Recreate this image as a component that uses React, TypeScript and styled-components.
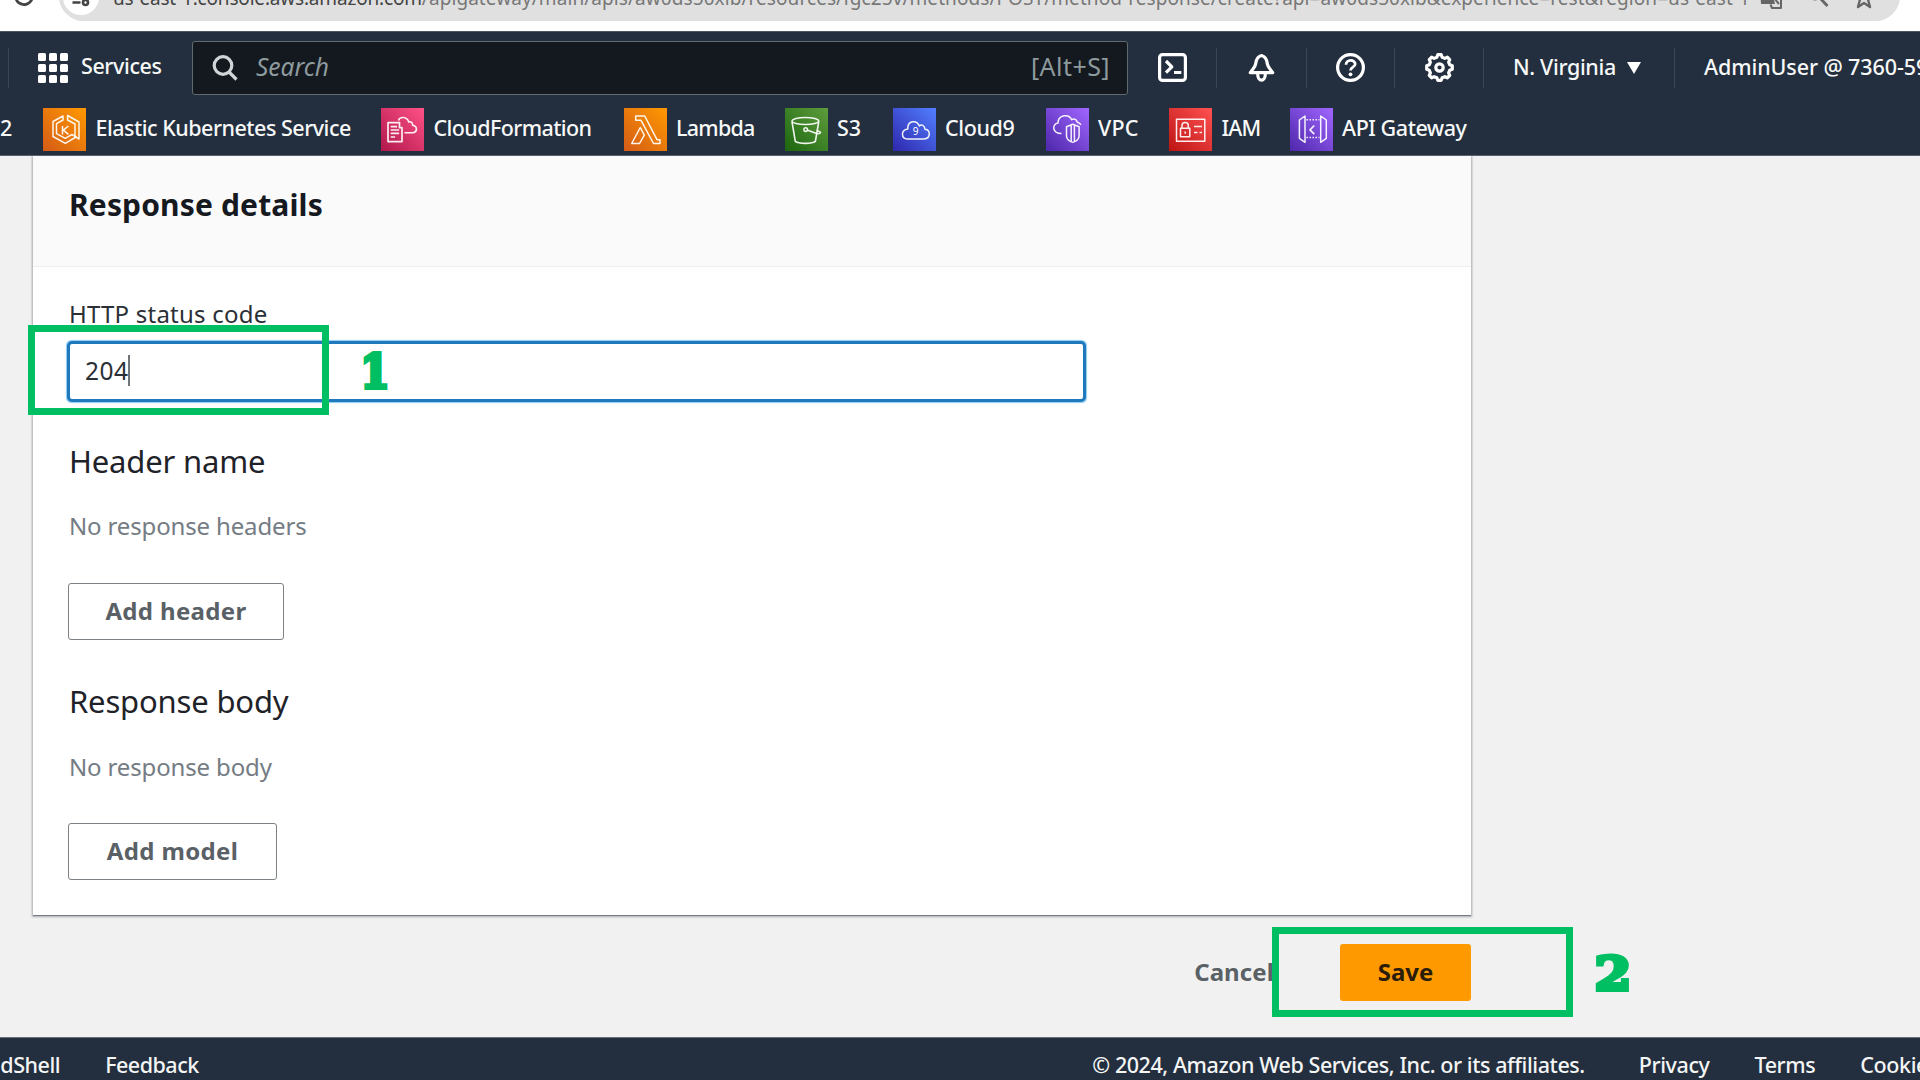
import React from "react";
import styled, { createGlobalStyle } from "styled-components";

const GlobalStyle = createGlobalStyle`
  *, *::before, *::after { box-sizing: border-box; }
  html, body { margin: 0; padding: 0; background: #f1f1f1; overflow: hidden; }
  body { font-family: "Noto Sans", "Open Sans", sans-serif; }
`;

const GREEN = "#00bf63";
const NAVY = "#232f3e";

const Shell = styled.div`
  position: relative;
  width: 1920px;
  height: 1080px;
  display: flex;
  flex-direction: column;
  overflow: hidden;
  background: #f1f1f1;
`;

/* ---------- browser chrome ---------- */

const BrowserBar = styled.div`
  flex: none;
  height: 31px;
  display: flex;
  align-items: flex-end;
  padding: 0 20px 10px 13px;
  background: #fff;
  overflow: hidden;
`;

const ReloadSlot = styled.span`
  display: flex;
  width: 50px;
  padding-bottom: 15px;
`;

const AddressPill = styled.div`
  flex: 1;
  height: 49px;
  display: flex;
  align-items: center;
  padding: 0 25px 0 4px;
  border-radius: 25px;
  background: #e0e0e0;
`;

const SiteBadge = styled.span`
  display: flex;
  align-items: center;
  justify-content: center;
  width: 36px;
  height: 36px;
  border-radius: 50%;
  background: #fff;
`;

const Url = styled.span`
  flex: none;
  width: 1646px;
  margin-left: 14px;
  padding-top: 2px;
  font-size: 19px;
  letter-spacing: 0.07px;
  line-height: 30px;
  white-space: nowrap;
  color: #777;
`;

const UrlHost = styled.span`
  letter-spacing: -0.18px;
  color: #444;
`;

const PillIcons = styled.span`
  flex: none;
  display: flex;
  align-items: center;
  gap: 23px;
  padding-top: 2px;
`;

/* ---------- console navigation ---------- */

const ConsoleNav = styled.header`
  flex: none;
  height: 125px;
  display: flex;
  flex-direction: column;
  border-top: 1px solid #4c5561;
  border-bottom: 1px solid #59616c;
  background: ${NAVY};
  color: #f7f8f8;
`;

const NavRow = styled.div`
  flex: none;
  height: 71px;
  display: flex;
  align-items: center;
`;

const NavCell = styled.div<{ $width?: number; $start?: boolean; $divider?: boolean }>`
  flex: none;
  display: flex;
  align-items: center;
  justify-content: ${(p) => (p.$start ? "flex-start" : "center")};
  width: ${(p) => (p.$width ? `${p.$width}px` : "auto")};
  height: 40px;
  padding-left: ${(p) => (p.$start ? "29px" : "0")};
  border-right: ${(p) => (p.$divider ? "1px solid #3b4654" : "0")};
`;

const NavText = styled.span<{ $track?: number; $gap?: number; $lift?: number }>`
  margin-left: ${(p) => p.$gap ?? 0}px;
  padding-bottom: ${(p) => (p.$lift ?? 1) * 2}px;
  font-size: 21.5px;
  font-weight: 500;
  letter-spacing: ${(p) => p.$track ?? -0.4}px;
  line-height: 30px;
  white-space: nowrap;
`;

const AppsGrid = styled.span`
  display: grid;
  grid-template-columns: repeat(3, 8px);
  grid-auto-rows: 8px;
  gap: 3px;
`;

const AppsDot = styled.i`
  border-radius: 1.5px;
  background: #fff;
`;

const SearchBox = styled.div`
  flex: none;
  width: 936px;
  height: 54px;
  display: flex;
  align-items: center;
  padding: 0 17px 0 19px;
  border: 1.5px solid #5f6b73;
  border-radius: 3px;
  background: #14181f;
  color: #8d9b9d;
  font-size: 24.5px;
  line-height: 34px;
`;

const SearchPlaceholder = styled.em`
  flex: 1;
  margin-left: 18px;
  padding-bottom: 2px;
`;

const SearchKeys = styled.span`
  padding-bottom: 3px;
  font-size: 25px;
  letter-spacing: 0.45px;
`;

const RegionArrow = styled.i`
  margin-left: 11px;
  border: solid transparent;
  border-width: 12px 7.5px 0;
  border-top-color: #fff;
`;

const Shortcuts = styled.nav`
  display: flex;
  align-items: center;
  height: 53px;
`;

const OverflowedShortcut = styled.span`
  flex: none;
  display: flex;
  justify-content: flex-end;
  width: 43px;
  padding-right: 31px;
`;

const Shortcut = styled.a<{ $slot: number }>`
  flex: none;
  display: flex;
  align-items: center;
  width: ${(p) => p.$slot}px;
`;

const Tile = styled.span<{ $from: string; $to: string }>`
  flex: none;
  display: flex;
  width: 43px;
  height: 43px;
  background: linear-gradient(45deg, ${(p) => p.$from}, ${(p) => p.$to});
`;

/* ---------- form ---------- */

const Page = styled.main`
  flex: none;
  width: 1471px;
  height: 881px;
  padding-left: 33px;
`;

const Card = styled.section`
  height: 759px;
  background: #fff;
  box-shadow: 0 1px 2px 1px rgba(0, 7, 22, 0.3), 0 1px 0 0 #a4a8ae;
  clip-path: inset(0 -4px -5px -4px);
`;

const CardHeader = styled.div`
  height: 111px;
  padding: 29px 36px 0;
  border-bottom: 1px solid #efefef;
  background: #fafafa;
`;

const CardTitle = styled.h2`
  margin: 0;
  font-size: 30px;
  font-weight: 700;
  letter-spacing: 0.15px;
  line-height: 40px;
  color: #16191f;
`;

const CardBody = styled.div`
  display: flex;
  flex-direction: column;
  align-items: flex-start;
  padding: 31px 36px 35px 35px;
`;

const FieldLabel = styled.label`
  margin-left: 1px;
  font-size: 24px;
  letter-spacing: 0.22px;
  line-height: 32px;
  color: #2b3036;
`;

const StatusInput = styled.div`
  display: flex;
  align-items: center;
  width: 1019px;
  height: 61px;
  margin: 11px 0 0 -1px;
  padding: 0 0 2px 15px;
  border: 3px solid #2078bd;
  border-radius: 5px;
  box-shadow: 0 0 1px 0.5px #8fcdf2;
  background: #fff;
  font-size: 24.5px;
  letter-spacing: 0.45px;
  color: #2b3036;
`;

const Caret = styled.i`
  width: 1.5px;
  height: 31px;
  background: #70757a;
`;

const SectionTitle = styled.h3<{ $above: number }>`
  margin: ${(p) => p.$above}px 0 0 1px;
  font-size: 31px;
  font-weight: 400;
  letter-spacing: -0.17px;
  line-height: 40px;
  color: #1f2329;
`;

const EmptyNote = styled.p<{ $above: number }>`
  margin: ${(p) => p.$above}px 0 0 1px;
  font-size: 24px;
  letter-spacing: -0.15px;
  line-height: 32px;
  color: #757c84;
`;

const OutlineButton = styled.button<{ $width: number; $above: number }>`
  width: ${(p) => p.$width}px;
  height: 57px;
  margin: ${(p) => p.$above}px 0 0;
  padding: 0 0 3px;
  border: 1.5px solid #7b8185;
  border-radius: 3px;
  background: #fff;
  font: 700 24px "Noto Sans", sans-serif;
  letter-spacing: 0.35px;
  color: #5a6166;
`;

const Actions = styled.div`
  display: flex;
  align-items: center;
  justify-content: flex-end;
  gap: 66px;
  margin-top: 29px;
`;

const CancelLink = styled.button`
  padding: 0 0 3px;
  border: 0;
  background: none;
  font: 700 24px "Noto Sans", sans-serif;
  letter-spacing: 0.1px;
  color: #5a6166;
`;

const SaveButton = styled.button`
  width: 131px;
  height: 57px;
  padding: 0 0 3px;
  border: 0;
  border-radius: 3px;
  background: #ff9900;
  font: 700 24px "Noto Sans", sans-serif;
  color: #2a1d0a;
`;

/* ---------- footer ---------- */

const Footer = styled.footer`
  flex: none;
  height: 43px;
  display: flex;
  align-items: center;
  padding-top: 12px;
  border-top: 1px solid #687078;
  background: ${NAVY};
  color: #f4f5f5;
`;

const FooterGroup = styled.div<{ $push?: boolean }>`
  flex: none;
  display: flex;
  gap: 45px;
  margin-left: ${(p) => (p.$push ? "auto" : "-44px")};
  margin-right: ${(p) => (p.$push ? "-131px" : "0")};
`;

/* ---------- tutorial marks drawn over the page ---------- */

const Highlight = styled.div<{ $x: number; $y: number; $w: number }>`
  position: absolute;
  left: ${(p) => p.$x}px;
  top: ${(p) => p.$y}px;
  width: ${(p) => p.$w}px;
  height: 90px;
  border: 7px solid ${GREEN};
`;

const StepNumber = styled.span<{ $x: number; $y: number; $stretch: number }>`
  position: absolute;
  left: ${(p) => p.$x}px;
  top: ${(p) => p.$y}px;
  width: 50px;
  text-align: center;
  font: 700 47px/50px "DejaVu Serif", serif;
  color: ${GREEN};
  -webkit-text-stroke: 4px ${GREEN};
  transform: scaleX(${(p) => p.$stretch});
`;

/* ---------- icons ---------- */

const Glyph = styled.svg`
  display: block;
  flex: none;
  fill: none;
  stroke: currentColor;
  stroke-linejoin: round;
`;

const ServiceGlyph = styled(Glyph).attrs({ viewBox: "0 0 43 43", width: 43, height: 43 })`
  stroke: #fff;
  stroke-width: 1.5;
  stroke-opacity: 0.92;
`;

const TopGlyph = styled(Glyph).attrs({ viewBox: "0 0 29 29", width: 29, height: 29 })`
  stroke: #fff;
  stroke-width: 3.2;
`;

const teeth = 8;
const gearPath =
  Array.from({ length: teeth }, (_, i) => {
    const at = (r: number, offset: number) => {
      const a = ((i + offset) / teeth) * Math.PI * 2 - Math.PI / 2;
      return `${(14.5 + r * Math.cos(a)).toFixed(2)} ${(14.5 + r * Math.sin(a)).toFixed(2)}`;
    };
    return `${i ? "L" : "M"}${at(12.9, -0.17)}L${at(12.9, 0.17)}L${at(10.6, 0.32)}L${at(10.6, 0.68)}`;
  }).join("") + "Z";

type Service = {
  name: string;
  slot: number;
  track: number;
  from: string;
  to: string;
  art: React.ReactNode;
};

const services: Service[] = [
  {
    name: "Elastic Kubernetes Service", slot: 338, track: -0.5, from: "#d45b17", to: "#ff9900",
    art: (
      <>
        <path d="M20 8 10 13.5v15l12.3 6.8L33 29l-4-2.6-6.7 4-8.8-4.7v-10L20 12z" />
        <path d="M24.6 7.5 36 14v17l-4-2.6V16l-7.4-4z" />
        <path d="M19.5 18v8.4M25.4 18l-5 4.1 5 4.3" />
      </>
    ),
  },
  {
    name: "CloudFormation", slot: 242.5, track: -0.6, from: "#b0174b", to: "#ff5288",
    art: (
      <>
        <path d="M7 14.6h11.5v5H21v14H7z" strokeWidth="1.7" />
        <path d="M9.7 18.6h6.4M9.7 22h8.4M9.7 25.4h8.4M9.7 29h4.4M17.5 12.5C18.6 8.3 26 8.4 27.8 14c2.2-.8 4 .6 3.8 3.3 5 1 5 6.6.6 7.4h-8.7" strokeWidth="1.6" />
      </>
    ),
  },
  {
    name: "Lambda", slot: 161, track: -0.75, from: "#d45b17", to: "#ff9900",
    art: (
      <>
        <path d="M11.7 8h9L33 31.7h3v3.8h-6.5L17 12.3h-5.3z" />
        <path d="m16.3 19.5 4 7.6-4.8 8.4H7.7z" />
      </>
    ),
  },
  {
    name: "S3", slot: 108, track: -0.1, from: "#1b660f", to: "#5f9d3d",
    art: (
      <>
        <ellipse cx="20.4" cy="13" rx="13.4" ry="3.6" />
        <path d="m7 13.8 3.3 19.6c3.5 2.6 16.6 2.6 20.1 0l3.3-19.6" strokeWidth="1.6" />
        <circle cx="20.7" cy="21.6" r="1.8" />
        <path d="m22 22 9 3.3c3 .9 5.5-.2 4.2-1.3l-3.5-1.7" />
      </>
    ),
  },
  {
    name: "Cloud9", slot: 153, track: -0.4, from: "#2e27ad", to: "#527fff",
    art: (
      <>
        <path d="M14.5 31H31c7-.7 6.8-9 1-9.7-.4-4.3-3.6-5-5.6-3.3-2.6-6.4-12-5.7-11.6 3-7.3 1-6.8 9.700-.3 10z" />
        <text x="22.7" y="27" fontSize="10" fill="#fff" stroke="none" textAnchor="middle">9</text>
      </>
    ),
  },
  {
    name: "VPC", slot: 123.5, track: 0.25, from: "#4d27aa", to: "#a166ff",
    art: (
      <>
        <path d="M15.5 25.5C6 25.5 5.7 16 12 15c.3-8.5 11-9.5 13.6-3.3 3-1.7 5 0 5.7 2.6 1.7.4 2.7 1.2 3.7 2.4" />
        <path d="m20.5 18.7 6.3-2.4 6.3 2.4V28c0 3-2.7 5.7-6.3 6.2-3.6-.5-6.3-3.2-6.3-6.2zM25.2 17v16.7M28.4 17v16.7" />
      </>
    ),
  },
  {
    name: "IAM", slot: 120.5, track: -0.9, from: "#bd1414", to: "#ff5252",
    art: (
      <>
        <path d="M7.5 11.3h28.3v22H7.5zM11.5 20.3h9.3v8.4h-9.3zM13 20v-2.5c0-4 6.3-4 6.3 0V20M16.2 23.5v2.3" />
        <path d="M25 18.5h8M25 24.5h3.5M30.5 24.5H33" />
      </>
    ),
  },
  {
    name: "API Gateway", slot: 200, track: -0.45, from: "#4d27aa", to: "#a166ff",
    art: (
      <>
        <path d="m15 8-5.6 4v18.3l5.6 4zM30.7 8l5.6 4v18.3l-5.6 4z" />
        <path d="M16.5 11.8h13M16.5 29.4h13" strokeDasharray="1.5 1.5" />
        <path d="M24.3 17.5 20 21.8l4.3 4.3" strokeWidth="1.7" />
      </>
    ),
  },
];

export default function App() {
  return (
    <>
      <GlobalStyle />
      <Shell>
        <BrowserBar>
          <ReloadSlot>
            <Glyph width="22" height="22" viewBox="0 0 22 22" strokeWidth="2.8" color="#444">
              <path d="M18.5 8A8.5 8.5 0 1 1 11 3.5" />
            </Glyph>
          </ReloadSlot>
          <AddressPill>
            <SiteBadge>
              <Glyph width="20" height="20" viewBox="0 0 20 20" strokeWidth="2.6" color="#444">
                <path d="M9 4.5h10M1.5 15.5h8" />
                <circle cx="4.5" cy="4.5" r="2.3" />
                <circle cx="14.5" cy="15.5" r="2.5" />
              </Glyph>
            </SiteBadge>
            <Url>
              <UrlHost>us-east-1.console.aws.amazon.com</UrlHost>
              /apigateway/main/apis/aw0ds50xib/resources/fgc25v/methods/POST/method-response/create?api=aw0ds50xib&amp;experience=rest&amp;region=us-east-1
            </Url>
            <PillIcons>
              <Glyph width="24" height="24" viewBox="0 0 24 24" color="#666" strokeWidth="2">
                <path d="M1 1h11l4 17H2z" fill="#666" stroke="none" />
                <path d="M13 6h9v16h-9l-1.5-3.5" />
                <path d="m15 12 5 6" />
              </Glyph>
              <Glyph width="24" height="24" viewBox="0 0 24 24" color="#666" strokeWidth="2.8">
                <circle cx="9" cy="7" r="6" />
                <path d="m13 11 8.5 9" />
              </Glyph>
              <Glyph width="22" height="24" viewBox="0 0 22 24" color="#666" strokeWidth="2.4">
                <path d="m11 2 2.5 6.5L20 9l-5 4.5 2 7.5-6-4-6 4 2-7.5L2 9l6.5-.5z" />
              </Glyph>
            </PillIcons>
          </AddressPill>
        </BrowserBar>

        <ConsoleNav>
          <NavRow>
            <NavCell $width={9} $divider />
            <NavCell $width={183} $start>
              <AppsGrid>
                {Array.from({ length: 9 }, (_, i) => <AppsDot key={i} />)}
              </AppsGrid>
              <NavText $gap={13} $lift={2}>Services</NavText>
            </NavCell>
            <SearchBox>
              <Glyph width="26" height="26" viewBox="0 0 26 26" color="#d0d5d8" strokeWidth="3.2">
                <circle cx="11" cy="10.5" r="8.8" />
                <path d="m17 17 7.5 7.5" />
              </Glyph>
              <SearchPlaceholder>Search</SearchPlaceholder>
              <SearchKeys>[Alt+S]</SearchKeys>
            </SearchBox>
            <NavCell $width={89} $divider>
              <TopGlyph>
                <rect x="1.6" y="1.6" width="25.8" height="25.8" rx="3" />
                <path d="m8 8 5.8 5.8L8 19.6M16 19.5h7.3" />
              </TopGlyph>
            </NavCell>
            <NavCell $width={90} $divider>
              <TopGlyph>
                <path d="M14.5 2.5C10 3.5 9 7.5 8.6 11c-.4 3.5-3.6 5.5-5.3 8.7h22.4c-1.7-3.2-4.9-5.2-5.3-8.7-.4-3.5-1.4-7.5-5.9-8.5z" />
                <path d="M10.7 21c0 8.2 7.6 8.2 7.6 0" />
              </TopGlyph>
            </NavCell>
            <NavCell $width={88} $divider>
              <TopGlyph>
                <circle cx="14.5" cy="14.5" r="12.9" />
                <path d="M10 11.8c0-6 9.2-5.5 9.2-.8 0 3.3-4.7 3-4.7 6.5" strokeWidth="2.8" />
                <circle cx="14.5" cy="21.3" r="1.9" fill="#fff" stroke="none" />
              </TopGlyph>
            </NavCell>
            <NavCell $width={89} $divider>
              <TopGlyph>
                <path d={gearPath} />
                <circle cx="14.5" cy="14.5" r="3.7" />
              </TopGlyph>
            </NavCell>
            <NavCell $width={191} $start $divider>
              <NavText $track={-0.35}>N. Virginia</NavText>
              <RegionArrow />
            </NavCell>
            <NavCell $start>
              <NavText $track={-0.1}>AdminUser @ 7360-5999</NavText>
            </NavCell>
          </NavRow>
          <Shortcuts>
            <OverflowedShortcut><NavText>EC2</NavText></OverflowedShortcut>
            {services.map((s) => (
              <Shortcut key={s.name} $slot={s.slot}>
                <Tile $from={s.from} $to={s.to}>
                  <ServiceGlyph>{s.art}</ServiceGlyph>
                </Tile>
                <NavText $gap={9.5} $track={s.track}>{s.name}</NavText>
              </Shortcut>
            ))}
          </Shortcuts>
        </ConsoleNav>

        <Page>
          <Card>
            <CardHeader>
              <CardTitle>Response details</CardTitle>
            </CardHeader>
            <CardBody>
              <FieldLabel>HTTP status code</FieldLabel>
              <StatusInput>204<Caret /></StatusInput>
              <SectionTitle $above={39}>Header name</SectionTitle>
              <EmptyNote $above={29}>No response headers</EmptyNote>
              <OutlineButton $width={216} $above={41}>Add header</OutlineButton>
              <SectionTitle $above={41}>Response body</SectionTitle>
              <EmptyNote $above={30}>No response body</EmptyNote>
              <OutlineButton $width={209} $above={40}>Add model</OutlineButton>
            </CardBody>
          </Card>
          <Actions>
            <CancelLink>Cancel</CancelLink>
            <SaveButton>Save</SaveButton>
          </Actions>
        </Page>

        <Footer>
          <FooterGroup>
            <NavText $lift={0} $track={-0.45}>CloudShell</NavText>
            <NavText $lift={0} $track={-0.5}>Feedback</NavText>
          </FooterGroup>
          <FooterGroup $push>
            <NavText $lift={0} $track={-0.43}>© 2024, Amazon Web Services, Inc. or its affiliates.</NavText>
            <NavText $lift={0} $gap={9}>Privacy</NavText>
            <NavText $lift={0}>Terms</NavText>
            <NavText $lift={0}>Cookie preferences</NavText>
          </FooterGroup>
        </Footer>

        <Highlight $x={28} $y={325} $w={301} />
        <StepNumber $x={350} $y={347} $stretch={0.9}>1</StepNumber>
        <Highlight $x={1272} $y={927} $w={301} />
        <StepNumber $x={1588} $y={949} $stretch={1.13}>2</StepNumber>
      </Shell>
    </>
  );
}
